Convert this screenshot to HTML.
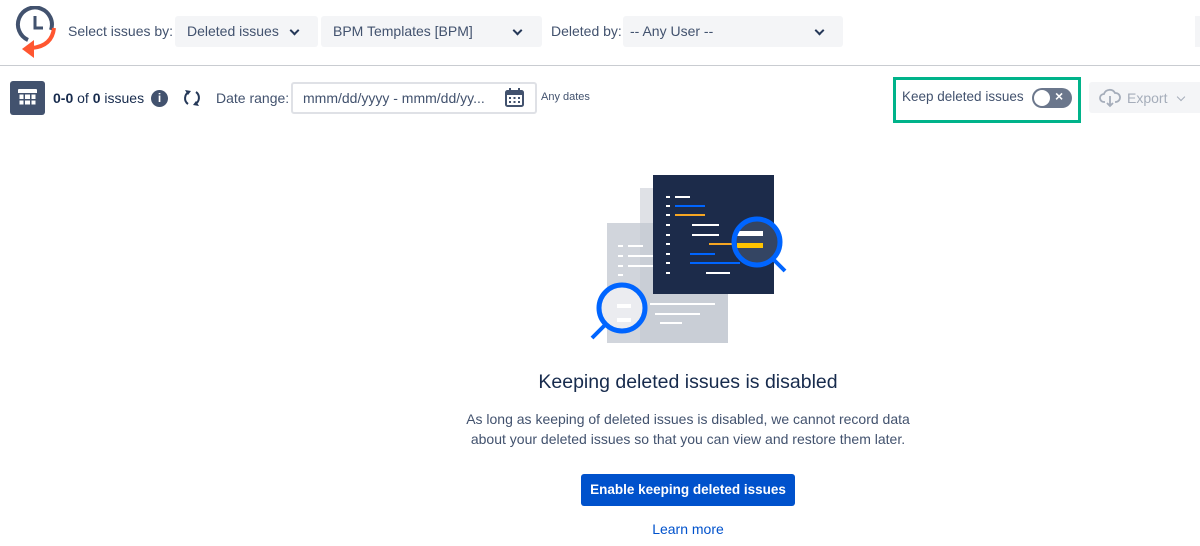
<!DOCTYPE html>
<html><head><meta charset="utf-8"><style>
*{box-sizing:border-box;margin:0;padding:0}
body{width:1200px;height:546px;background:#fff;font-family:"Liberation Sans",Arial,sans-serif;color:#42526e;position:relative;overflow:hidden;font-size:14px}
.abs{position:absolute}
.sel{position:absolute;top:16px;height:31px;background:#f4f5f7;border-radius:3px;font-size:14px;color:#42526e;padding:7px 12px}
.chev{position:absolute;top:11px;width:7px;height:7px;border-right:2px solid #253858;border-bottom:2px solid #253858;transform:rotate(45deg)}
.lbl{position:absolute;font-size:14px;color:#42526e}
</style></head><body>
<svg class="abs" style="left:14px;top:6px" width="42" height="52" viewBox="0 0 42 52">
<path d="M14 34 A17 17 0 1 1 37 24" fill="none" stroke="#42526e" stroke-width="4"/>
<path d="M21 10 V22 H29" fill="none" stroke="#42526e" stroke-width="3"/>
<path d="M40 22 Q38 40 18 42" fill="none" stroke="#ff5630" stroke-width="4"/>
<path d="M20 34 L8 43 L20 52 Z" fill="#ff5630"/>
</svg>
<div class="lbl" style="left:68px;top:23px">Select issues by:</div>
<div class="sel" style="left:175px;width:143px">Deleted issues<span class="chev" style="left:116px"></span></div>
<div class="sel" style="left:321px;width:221px">BPM Templates [BPM]<span class="chev" style="left:193px"></span></div>
<div class="lbl" style="left:551px;top:23px">Deleted by:</div>
<div class="sel" style="left:623px;width:220px;padding-left:7px">-- Any User --<span class="chev" style="left:193px"></span></div>
<div class="abs" style="left:1195px;top:16px;width:10px;height:31px;background:#f4f5f7"></div>
<div class="abs" style="left:0;top:65px;width:1200px;height:1px;background:#c9ccd1"></div>

<div class="abs" style="left:10px;top:81px;width:35px;height:34px;background:#42526e;border-radius:3px"></div>
<svg class="abs" style="left:18px;top:89px" width="19" height="17" viewBox="0 0 19 17"><rect x="0" y="0" width="19" height="17" rx="1" fill="#fff"/><g fill="#42526e"><rect x="0" y="4" width="19" height="1.5"/><rect x="0" y="10" width="19" height="1.5"/><rect x="5.5" y="4" width="1.5" height="13"/><rect x="12" y="4" width="1.5" height="13"/><rect x="0" y="15.5" width="19" height="1.5"/><rect x="0" y="4" width="1.5" height="13"/><rect x="17.5" y="4" width="1.5" height="13"/></g></svg>
<div class="lbl" style="left:53px;top:90px;color:#172b4d"><b>0-0</b> of <b>0</b> issues</div>
<div class="abs" style="left:151px;top:90px;width:17px;height:17px;border-radius:50%;background:#42526e;color:#fff;font-size:12px;font-weight:bold;text-align:center;line-height:17px">i</div>
<svg class="abs" style="left:182px;top:88px" width="20" height="20" viewBox="0 0 20 20"><path d="M7 4 A7 7 0 0 0 6 16" fill="none" stroke="#253858" stroke-width="2"/><path d="M13 16 A7 7 0 0 0 14 4" fill="none" stroke="#253858" stroke-width="2"/><path d="M3 2 L9 3 L6 7Z M17 18 L11 17 L14 13Z" fill="#253858"/></svg>
<div class="lbl" style="left:216px;top:90px">Date range:</div>
<div class="abs" style="left:291px;top:82px;width:246px;height:32px;border:2px solid #dfe1e6;border-radius:3px;padding:6px 10px;font-size:14px;color:#42526e">mmm/dd/yyyy - mmm/dd/yy...</div>
<svg class="abs" style="left:505px;top:88px" width="19" height="19" viewBox="0 0 19 19"><rect x="1" y="3" width="17" height="15" rx="1.5" fill="none" stroke="#42526e" stroke-width="2"/><rect x="1" y="3" width="17" height="4" fill="#42526e"/><rect x="4" y="0" width="2" height="4" fill="#42526e"/><rect x="13" y="0" width="2" height="4" fill="#42526e"/><g fill="#42526e"><rect x="4" y="9" width="2" height="2"/><rect x="8.5" y="9" width="2" height="2"/><rect x="13" y="9" width="2" height="2"/><rect x="4" y="13" width="2" height="2"/><rect x="8.5" y="13" width="2" height="2"/><rect x="13" y="13" width="2" height="2"/></g></svg>
<div class="lbl" style="left:541px;top:91px;font-size:11px">Any dates</div>

<div class="abs" style="left:893px;top:77px;width:188px;height:46px;border:3px solid #00b38a"></div>
<div class="lbl" style="left:902px;top:89px;font-size:13.5px">Keep deleted issues</div>
<div class="abs" style="left:1032px;top:88px;width:40px;height:20px;border-radius:10px;background:#6b778c"></div>
<div class="abs" style="left:1034px;top:90px;width:16px;height:16px;border-radius:50%;background:#fff"></div>
<div class="abs" style="left:1055px;top:88px;color:#fff;font-size:14px;font-weight:bold">×</div>
<div class="abs" style="left:1089px;top:82px;width:115px;height:31px;background:#f4f5f7;border-radius:3px"></div>
<svg class="abs" style="left:1099px;top:88px" width="22" height="20" viewBox="0 0 22 20"><path d="M6 14 H5 A4 4 0 0 1 5 6 A6 6 0 0 1 16 5 A4.5 4.5 0 0 1 17 14 H16" fill="none" stroke="#a5adba" stroke-width="1.8"/><path d="M11 8 V18 M8 15 L11 18 L14 15" fill="none" stroke="#a5adba" stroke-width="1.8"/></svg>
<div class="lbl" style="left:1127px;top:90px;color:#a5adba">Export</div>
<span class="chev" style="left:1178px;top:94px;width:6px;height:6px;border-color:#a5adba;border-width:1.5px"></span>

<svg class="abs" style="left:585px;top:172px" width="210" height="175" viewBox="585 172 210 175">
<rect x="640" y="188" width="88" height="155" fill="#dfe1e6"/>
<rect x="607" y="223" width="121" height="120" fill="#c1c7d0" opacity=".75"/>
<g fill="#fff"><rect x="618" y="245" width="5" height="2"/><rect x="628" y="245" width="15" height="2"/><rect x="618" y="255" width="5" height="2"/><rect x="628" y="255" width="30" height="2"/><rect x="618" y="265" width="5" height="2"/><rect x="628" y="265" width="25" height="2"/><rect x="618" y="274" width="5" height="2"/><rect x="650" y="303" width="65" height="2"/><rect x="655" y="313" width="45" height="2"/><rect x="660" y="322" width="22" height="2"/></g>
<rect x="653" y="175" width="121" height="119" fill="#1c2b4a"/>
<g fill="#fff"><rect x="666" y="196" width="4" height="2"/><rect x="675" y="196" width="15" height="2"/><rect x="666" y="205" width="4" height="2"/><rect x="666" y="214" width="4" height="2"/><rect x="666" y="224" width="4" height="2"/><rect x="692" y="224" width="27" height="2"/><rect x="666" y="234" width="4" height="2"/><rect x="692" y="234" width="27" height="2"/><rect x="666" y="243" width="4" height="2"/><rect x="666" y="253" width="4" height="2"/><rect x="666" y="262" width="4" height="2"/><rect x="666" y="272" width="4" height="2"/><rect x="706" y="272" width="24" height="2"/></g>
<rect x="675" y="205" width="30" height="2" fill="#0065ff"/><rect x="675" y="214" width="30" height="2" fill="#f6a623"/>
<rect x="709" y="243" width="25" height="2" fill="#f6a623"/><rect x="690" y="253" width="25" height="2" fill="#0065ff"/><rect x="690" y="262" width="50" height="2" fill="#0065ff"/>
<circle cx="757" cy="242" r="23" fill="#344563"/>
<rect x="737" y="231" width="26" height="5" fill="#fff"/><rect x="737" y="243" width="26" height="5" fill="#ffc400"/>
<circle cx="757" cy="242" r="23" fill="none" stroke="#0065ff" stroke-width="5"/>
<path d="M773 259 L785 271" stroke="#0065ff" stroke-width="4"/>
<circle cx="622" cy="308" r="23" fill="#ebecf0"/>
<rect x="617" y="304" width="14" height="4" fill="#fff"/><rect x="617" y="318" width="14" height="4" fill="#fff"/>
<circle cx="622" cy="308" r="23" fill="none" stroke="#0065ff" stroke-width="5"/>
<path d="M606 324 L592 338" stroke="#0065ff" stroke-width="4"/>
</svg>

<div class="abs" style="left:0;width:1376px;top:371px;text-align:center;font-size:19.5px;color:#172b4d">Keeping deleted issues is disabled</div>
<div class="abs" style="left:0;width:1376px;top:409px;text-align:center;font-size:14px;line-height:20px;color:#42526e">As long as keeping of deleted issues is disabled, we cannot record data<br>about your deleted issues so that you can view and restore them later.</div>
<div class="abs" style="left:581px;top:474px;width:214px;height:32px;background:#0052cc;border-radius:3px;color:#fff;font-size:13.5px;font-weight:bold;text-align:center;line-height:32px">Enable keeping deleted issues</div>
<div class="abs" style="left:0;width:1376px;top:521px;text-align:center;font-size:14px;color:#0052cc">Learn more</div>
</body></html>
